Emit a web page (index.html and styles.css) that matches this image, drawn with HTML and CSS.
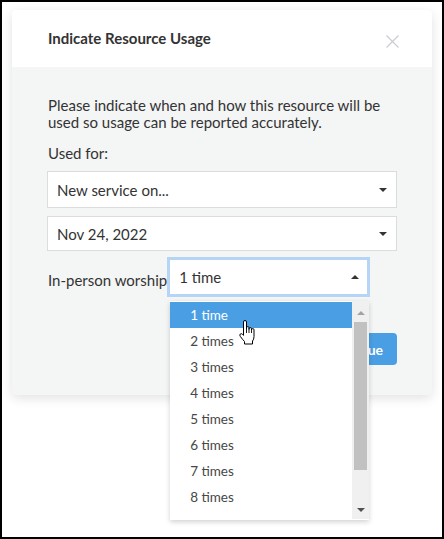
FILE: index.html
```html
<!DOCTYPE html>
<html lang="en">
<head>
    <meta charset="UTF-8">
    <meta name="viewport" content="width=device-width, initial-scale=1.0">
    <title>Indicate Resource Usage</title>
    <link rel="stylesheet" href="styles.css">
</head>
<body>
    <div class="modal">
        <div class="modal-header">
            <h4 class="modal-title">Indicate Resource Usage</h4>
            <span class="close">
                <svg width="13" height="13" viewBox="0 0 13 13"><path d="M0.5 0.5 L12.5 12.5 M12.5 0.5 L0.5 12.5" stroke="#c9ccd3" stroke-width="1.2" fill="none"/></svg>
            </span>
        </div>
        <div class="modal-body">
            <p class="intro">Please indicate when and how this resource will be used so usage can be reported accurately.</p>
            <div class="field-label">Used for:</div>
            <div class="select"><span>New service on...</span><i class="caret"></i></div>
            <div class="select"><span>Nov 24, 2022</span><i class="caret"></i></div>
            <div class="inline-row">
                <span class="inline-label">In-person worship</span>
                <div class="select-wrap">
                    <div class="select focused"><span>1 time</span><i class="caret up"></i></div>
                    <div class="options">
                        <ul class="option-list">
                            <li class="active">1 time</li>
                            <li>2 times</li>
                            <li>3 times</li>
                            <li>4 times</li>
                            <li>5 times</li>
                            <li>6 times</li>
                            <li>7 times</li>
                            <li>8 times</li>
                        </ul>
                        <div class="scrollbar">
                            <i class="scroll-arrow"></i>
                            <div class="scroll-track"><div class="scroll-thumb"></div></div>
                            <i class="scroll-arrow down"></i>
                        </div>
                        <svg class="pointer" width="19" height="25" viewBox="0 0 19 25">
                            <path d="M5.5 2 Q5.5 0.5 7 0.5 Q8.5 0.5 8.5 2 L8.5 9 L8.5 7.8 Q8.5 6.6 9.8 6.6 Q11 6.6 11 7.8 L11 9.6 L11 8.8 Q11 7.6 12.3 7.6 Q13.5 7.6 13.5 8.8 L13.5 10.4 L13.5 9.8 Q13.5 8.6 14.8 8.6 Q16 8.6 16 9.8 L16 16.5 Q16 19.5 14.5 21 L14.5 24 L6.5 24 L6.5 21.5 Q4.5 19.5 2.3 16.4 Q1.3 15 2.3 14 Q3.4 13.2 4.5 14.3 L5.5 15.4 Z" fill="#fff" stroke="#000" stroke-width="1" stroke-linejoin="round"/>
                            <path d="M8.5 9 V13 M11 9.6 V13 M13.5 10.4 V13" stroke="#000" stroke-width="0.9" fill="none"/>
                        </svg>
                    </div>
                </div>
            </div>
            <div class="actions">
                <button class="btn-primary">Continue</button>
            </div>
        </div>
    </div>
</body>
</html>
```

FILE: styles.css
```css
html, body {
    margin: 0;
    height: 100%;
}
body {
    box-sizing: border-box;
    border: 2px solid #000;
    background: #fff;
    font-family: Lato, "Open Sans", sans-serif;
    color: #333;
    padding: 8px 10px 0;
}
.modal {
    background: #f4f5f5;
    border-radius: 4px;
    box-shadow: 0 3px 12px rgba(0, 0, 0, 0.12);
}
.modal-header {
    background: #fff;
    border-radius: 4px 4px 0 0;
    height: 57px;
    box-sizing: border-box;
    padding: 18px 33px 0 36px;
    display: flex;
    justify-content: space-between;
    align-items: flex-start;
}
.modal-title {
    margin: 0;
    font-size: 15px;
    font-weight: bold;
    line-height: 20px;
}
.close {
    margin-top: 7px;
    line-height: 0;
}
.modal-body {
    padding: 30px 35px 30px;
}
.intro {
    margin: 0 0 0 1px;
    font-size: 15px;
    line-height: 17px;
}
.field-label {
    margin: 13px 0 9px 1px;
    font-size: 15px;
    line-height: 18px;
}
.select {
    height: 37px;
    box-sizing: border-box;
    background: #fff;
    border: 1px solid #dcdcdc;
    padding: 0 7px 0 9px;
    display: flex;
    align-items: center;
    justify-content: space-between;
    font-size: 15px;
    margin-bottom: 8px;
}
.select + .select {
    height: 35px;
}
.caret {
    width: 0;
    height: 0;
    border-left: 4px solid transparent;
    border-right: 4px solid transparent;
    border-top: 4px solid #333;
    margin-right: 2px;
}
.caret.up {
    border-top: none;
    border-bottom: 4px solid #333;
}
.inline-row {
    display: flex;
    align-items: center;
    margin-top: -2px;
    font-size: 15px;
}
.inline-label {
    margin: 6px 0 0 1px;
}
.select-wrap {
    position: relative;
}
.select.focused {
    width: 203px;
    height: 40px;
    border: 3px solid #b5d4f6;
    padding-left: 9px;
    padding-right: 6px;
    margin: 0;
}
.options {
    position: absolute;
    top: 44px;
    left: 3px;
    width: 199px;
    height: 219px;
    background: #fff;
    box-shadow: 0 2px 5px rgba(0, 0, 0, 0.18);
    display: flex;
    z-index: 2;
}
.option-list {
    list-style: none;
    margin: 0;
    padding: 1px 0 0;
    flex: 1;
}
.option-list li {
    height: 26px;
    line-height: 26px;
    padding-left: 20px;
    font-size: 13.5px;
    color: #474747;
}
.option-list li.active {
    background: #4a9fe4;
    color: #fff;
}
.scrollbar {
    width: 17px;
    background: #f0f0f0;
    display: flex;
    flex-direction: column;
    align-items: center;
    padding: 5px 0 7px;
    box-sizing: border-box;
    margin-bottom: 1px;
}
.scroll-arrow {
    width: 0;
    height: 0;
    border-left: 4px solid transparent;
    border-right: 4px solid transparent;
    border-bottom: 4px solid #a3a3a3;
    margin: 5px 0 7px;
}
.scroll-arrow.down {
    border-bottom: none;
    border-top: 4px solid #505050;
    margin: 0;
}
.scroll-track {
    flex: 1;
    width: 13px;
}
.scroll-thumb {
    height: 148px;
    background: #c1c1c1;
}
.pointer {
    position: absolute;
    left: 68px;
    top: 19px;
}
.actions {
    display: flex;
    justify-content: flex-end;
    margin-top: 36px;
}
.btn-primary {
    background: #4a9fe4;
    color: #fff;
    border: none;
    border-radius: 4px;
    height: 32px;
    padding: 0 14px;
    font-family: Lato, sans-serif;
    font-size: 14px;
    font-weight: bold;
}
```
